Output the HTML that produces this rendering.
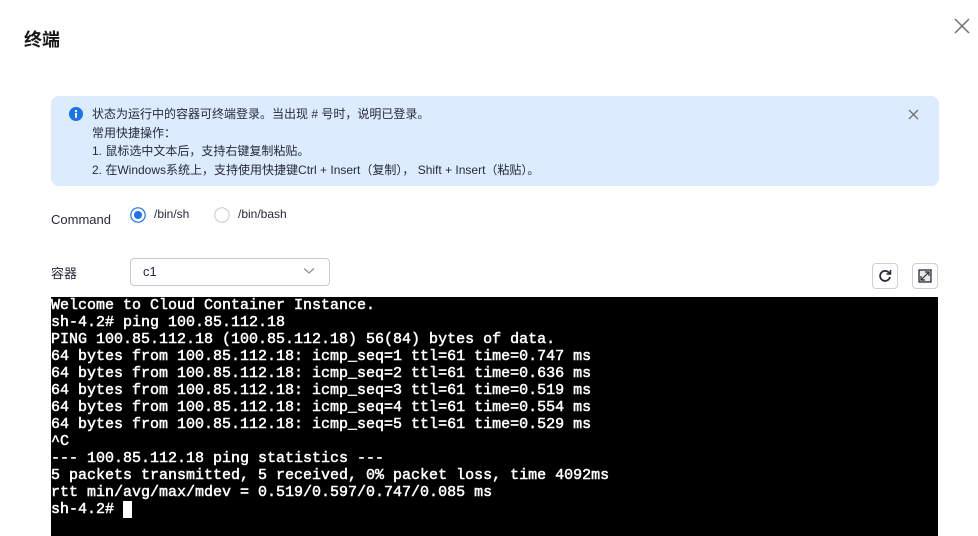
<!DOCTYPE html>
<html><head><meta charset="utf-8"><style>
body{margin:0;width:978px;height:536px;background:#fff;position:relative;overflow:hidden;font-family:"Liberation Sans","Noto Sans CJK SC",sans-serif;color:#252b3a}
.abs{position:absolute}
.title{left:24px;top:26px;font-size:18px;font-weight:bold;color:#191919}
.alert{left:51px;top:96px;width:888px;height:90px;background:#dcebfe;border-radius:8px}
.alert .t{position:absolute;left:41px;top:9px;font-size:12px;line-height:18.6px;color:#252b3a}
.term{left:51px;top:297px;width:887px;height:239px;background:#000;color:#fff;font-family:"Liberation Mono",monospace;font-weight:normal;-webkit-text-stroke:0.5px #fff;font-size:15px;line-height:17px;white-space:pre;padding-top:0}
.lbl{font-size:13px;color:#252b3a}
.btn{width:26px;height:26px;border:1px solid #cfd0d4;border-radius:4px;box-sizing:border-box;display:flex;align-items:center;justify-content:center}
</style></head><body>
<div class="abs title">终端</div>
<svg class="abs" style="left:953px;top:17px" width="18" height="18" viewBox="0 0 18 18"><path d="M2 2L16 16M16 2L2 16" stroke="#707070" stroke-width="1.5"/></svg>
<div class="abs alert">
<svg style="position:absolute;left:18px;top:11px" width="14" height="14" viewBox="0 0 14 14"><circle cx="7" cy="7" r="7" fill="#1a73e8"/><rect x="6" y="5.8" width="2" height="5" fill="#fff"/><rect x="6" y="3" width="2" height="2" fill="#fff"/></svg>
<div class="t">状态为运行中的容器可终端登录。当出现 # 号时，说明已登录。<br>常用快捷操作：<br>1. 鼠标选中文本后，支持右键复制粘贴。<br>2. 在Windows系统上，支持使用快捷键Ctrl + Insert（复制）， Shift + Insert（粘贴）。</div>
<svg style="position:absolute;left:857px;top:13px" width="11" height="11" viewBox="0 0 11 11"><path d="M1 1L10 10M10 1L1 10" stroke="#707070" stroke-width="1.3"/></svg>
</div>
<div class="abs lbl" style="left:51px;top:212px">Command</div>
<svg class="abs" style="left:130px;top:207px" width="16" height="16"><circle cx="8" cy="8" r="7.2" fill="#fff" stroke="#1a73e8" stroke-width="1.2"/><circle cx="8" cy="8" r="4" fill="#1a73e8"/></svg>
<div class="abs" style="left:154px;top:207px;font-size:12px">/bin/sh</div>
<svg class="abs" style="left:214px;top:207px" width="16" height="16"><circle cx="8" cy="8" r="7.2" fill="#fff" stroke="#c8c9cc" stroke-width="1"/></svg>
<div class="abs" style="left:238px;top:207px;font-size:12px">/bin/bash</div>
<div class="abs lbl" style="left:51px;top:263px">容器</div>
<div class="abs" style="left:130px;top:258px;width:200px;height:28px;border:1px solid #c8c9cc;border-radius:4px;box-sizing:border-box"></div>
<div class="abs" style="left:143px;top:264px;font-size:13px">c1</div>
<svg class="abs" style="left:303px;top:267px" width="12" height="8"><path d="M1 1.5L6 6L11 1.5" stroke="#8a8e99" stroke-width="1.2" fill="none"/></svg>
<div class="abs btn" style="left:872px;top:263px"><svg width="16" height="16" viewBox="0 0 16 16"><path d="M12.5 5.5A5 5 0 1 0 13 9" stroke="#252b3a" stroke-width="1.8" fill="none"/><path d="M13.5 2L13.5 6L9.5 6" stroke="#252b3a" stroke-width="1.6" fill="none"/></svg></div>
<div class="abs btn" style="left:912px;top:263px"><svg width="14" height="14" viewBox="0 0 14 14"><rect x="1" y="1" width="12" height="12" fill="#e8e8e8" stroke="#252b3a" stroke-width="1.3"/><path d="M3 11L11 3M7 3H11V7M3 7V11H7" stroke="#252b3a" stroke-width="1.2" fill="none"/></svg></div>
<div class="abs term">Welcome to Cloud Container Instance.
sh-4.2# ping 100.85.112.18
PING 100.85.112.18 (100.85.112.18) 56(84) bytes of data.
64 bytes from 100.85.112.18: icmp_seq=1 ttl=61 time=0.747 ms
64 bytes from 100.85.112.18: icmp_seq=2 ttl=61 time=0.636 ms
64 bytes from 100.85.112.18: icmp_seq=3 ttl=61 time=0.519 ms
64 bytes from 100.85.112.18: icmp_seq=4 ttl=61 time=0.554 ms
64 bytes from 100.85.112.18: icmp_seq=5 ttl=61 time=0.529 ms
^C
--- 100.85.112.18 ping statistics ---
5 packets transmitted, 5 received, 0% packet loss, time 4092ms
rtt min/avg/max/mdev = 0.519/0.597/0.747/0.085 ms
sh-4.2# <span style="background:#fff">&nbsp;</span></div>
</body></html>
